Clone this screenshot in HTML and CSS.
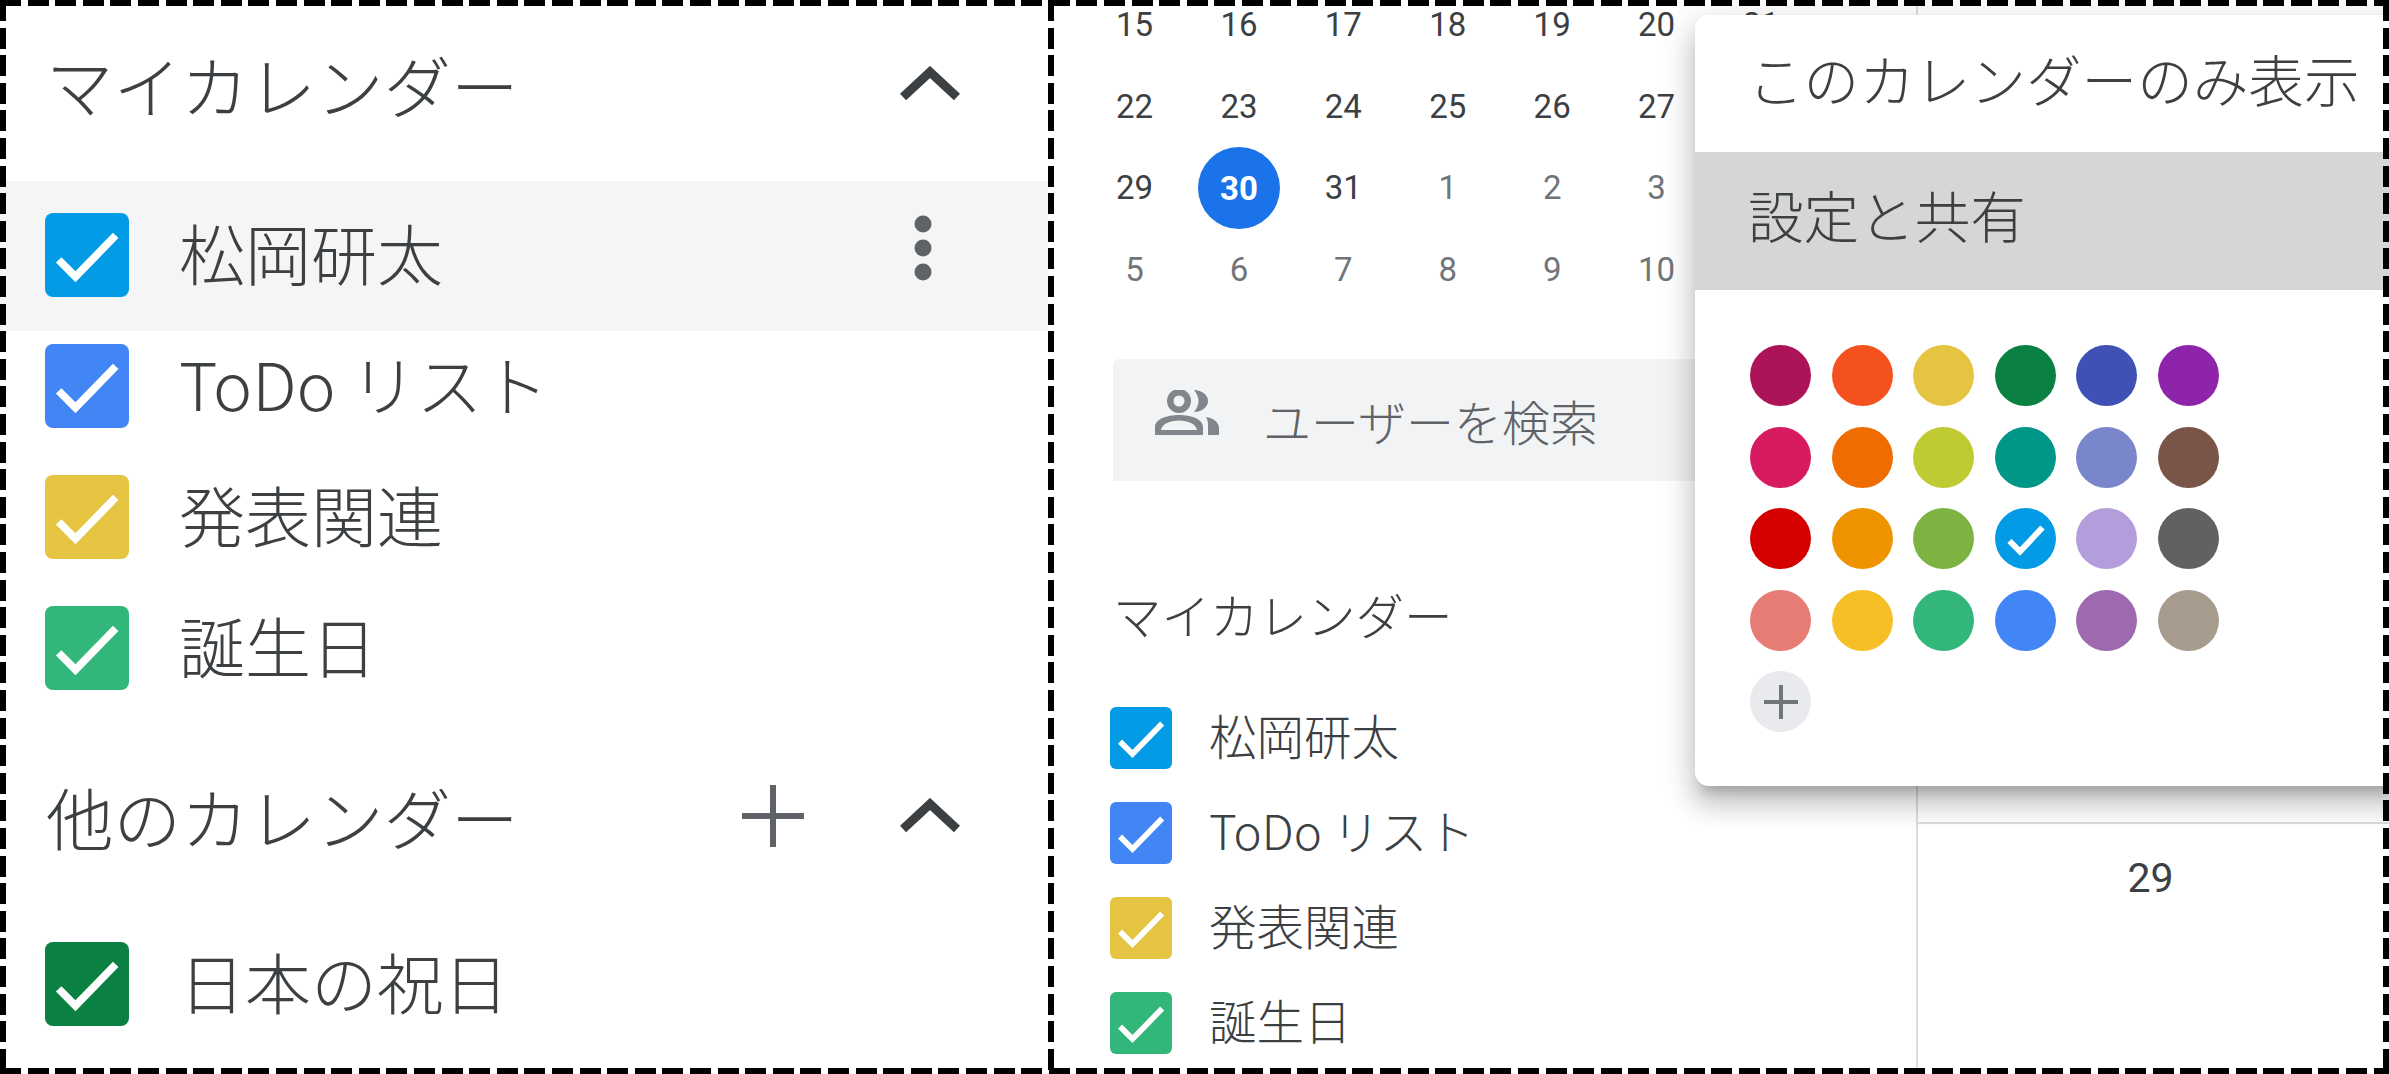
FILE: index.html
```html
<!DOCTYPE html>
<html>
<head>
    <meta charset="utf-8">
    <link rel="stylesheet" href="styles.css">
</head>
<body>
    <div class="shot">
        <!-- zoomed sidebar -->
        <div class="panel panel-left">
            <div class="big-head">
                <span class="big-title">マイカレンダー</span>
                <svg class="chevron" viewBox="0 0 60 36"><path d="M3 31 L30 6 L57 31"/></svg>
            </div>
            <div class="big-list">
                <div class="big-row big-row-active">
                    <span class="box box-big c-peacock"><svg viewBox="0 0 24 24"><path d="M3.9 13.4 L8.7 18.2 L20.2 6.4"/></svg></span>
                    <span class="big-name">松岡研太</span>
                    <svg class="kebab" viewBox="0 0 20 66"><circle cx="10" cy="9" r="8.5"/><circle cx="10" cy="33" r="8.5"/><circle cx="10" cy="57" r="8.5"/></svg>
                </div>
                <div class="big-row">
                    <span class="box box-big c-cobalt"><svg viewBox="0 0 24 24"><path d="M3.9 13.4 L8.7 18.2 L20.2 6.4"/></svg></span>
                    <span class="big-name">ToDo リスト</span>
                </div>
                <div class="big-row">
                    <span class="box box-big c-citron"><svg viewBox="0 0 24 24"><path d="M3.9 13.4 L8.7 18.2 L20.2 6.4"/></svg></span>
                    <span class="big-name">発表関連</span>
                </div>
                <div class="big-row">
                    <span class="box box-big c-sage"><svg viewBox="0 0 24 24"><path d="M3.9 13.4 L8.7 18.2 L20.2 6.4"/></svg></span>
                    <span class="big-name">誕生日</span>
                </div>
            </div>
            <div class="big-head big-head-other">
                <span class="big-title">他のカレンダー</span>
                <svg class="plus" viewBox="0 0 62 62"><path d="M31 0 V62 M0 31 H62"/></svg>
                <svg class="chevron" viewBox="0 0 60 36"><path d="M3 31 L30 6 L57 31"/></svg>
            </div>
            <div class="big-row big-row-last">
                <span class="box box-big c-basil"><svg viewBox="0 0 24 24"><path d="M3.9 13.4 L8.7 18.2 L20.2 6.4"/></svg></span>
                <span class="big-name">日本の祝日</span>
            </div>
        </div>

        <!-- calendar with open menu -->
        <div class="panel panel-right">
            <div class="side">
                <div class="mini-cal">
                    <span>15</span><span>16</span><span>17</span><span>18</span><span>19</span><span>20</span><span>21</span>
                    <span>22</span><span>23</span><span>24</span><span>25</span><span>26</span><span>27</span><span></span>
                    <span>29</span><span class="today">30</span><span>31</span><span class="off">1</span><span class="off">2</span><span class="off">3</span><span></span>
                    <span class="off">5</span><span class="off">6</span><span class="off">7</span><span class="off">8</span><span class="off">9</span><span class="off">10</span><span></span>
                </div>
                <div class="search">
                    <svg class="people" viewBox="0 0 64 46">
                        <path fill-rule="evenodd" d="M24 -1 A12 12 0 1 0 24 23 A12 12 0 1 0 24 -1 Z M24 5.5 A5.5 5.5 0 1 1 24 16.5 A5.5 5.5 0 1 1 24 5.500 Z"/>
                        <path fill-rule="evenodd" d="M0 45 V37 C0 29 12 25 24 25 C36 25 48 29 48 37 V45 Z M6 40 H42 C41 34 33 30.5 24 30.5 C15 30.5 7 34 6 40 Z"/>
                        <path d="M39 0 C47 0 53 5 53 11 C53 17 47 22 39 22 C42 18 43.5 15 43.5 11 C43.5 7 42 4 39 0 Z"/>
                        <path d="M51 27 C58 28 64 32 64 38 V45 H53 V37 C53 33 53 30 51 27 Z"/>
                    </svg>
                    <span class="search-text">ユーザーを検索</span>
                </div>
                <div class="side-title">マイカレンダー</div>
                <div class="side-list">
                    <div class="side-row"><span class="box box-small c-peacock"><svg viewBox="0 0 24 24"><path d="M3.9 13.4 L8.7 18.2 L20.2 6.4"/></svg></span><span class="side-name">松岡研太</span></div>
                    <div class="side-row"><span class="box box-small c-cobalt"><svg viewBox="0 0 24 24"><path d="M3.9 13.4 L8.7 18.2 L20.2 6.4"/></svg></span><span class="side-name">ToDo リスト</span></div>
                    <div class="side-row"><span class="box box-small c-citron"><svg viewBox="0 0 24 24"><path d="M3.9 13.4 L8.7 18.2 L20.2 6.4"/></svg></span><span class="side-name">発表関連</span></div>
                    <div class="side-row"><span class="box box-small c-sage"><svg viewBox="0 0 24 24"><path d="M3.9 13.4 L8.7 18.2 L20.2 6.4"/></svg></span><span class="side-name">誕生日</span></div>
                </div>
            </div>
            <div class="main">
                <div class="main-top"></div>
                <div class="main-cell">29</div>
            </div>
            <div class="menu">
                <div class="menu-item">このカレンダーのみ表示</div>
                <div class="menu-item menu-item-hover">設定と共有</div>
                <div class="swatches">
                    <span class="dot c-beetroot"></span>
                    <span class="dot c-tangerine"></span>
                    <span class="dot c-citron"></span>
                    <span class="dot c-basil"></span>
                    <span class="dot c-blueberry"></span>
                    <span class="dot c-grape"></span>
                    <span class="dot c-cherry"></span>
                    <span class="dot c-pumpkin"></span>
                    <span class="dot c-avocado"></span>
                    <span class="dot c-eucalyptus"></span>
                    <span class="dot c-lavender"></span>
                    <span class="dot c-cocoa"></span>
                    <span class="dot c-tomato"></span>
                    <span class="dot c-mango"></span>
                    <span class="dot c-pistachio"></span>
                    <span class="dot c-peacock"><svg viewBox="0 0 61 61"><path d="M14.5 33 L25 43.5 L47.5 19.5"/></svg></span>
                    <span class="dot c-wisteria"></span>
                    <span class="dot c-graphite"></span>
                    <span class="dot c-flamingo"></span>
                    <span class="dot c-banana"></span>
                    <span class="dot c-sage"></span>
                    <span class="dot c-cobalt"></span>
                    <span class="dot c-amethyst"></span>
                    <span class="dot c-birch"></span>
                    <span class="dot dot-add"><svg viewBox="0 0 34 34"><path d="M17 0 V34 M0 17 H34"/></svg></span>
                </div>
            </div>
        </div>
    </div>
</body>
</html>
```

FILE: styles.css
```css
html, body {
    margin: 0;
    height: 100%;
    background: #fff;
}
body {
    font-family: "Noto Sans CJK JP", "Noto Sans", sans-serif;
    color: #3c4043;
    overflow: hidden;
}
.shot {
    position: relative;
    display: flex;
    width: 2389px;
    height: 1074px;
}
/* dashed frame sits over everything, a normal dashed border has the wrong dash length */
.shot::after {
    content: "";
    position: absolute;
    inset: 0;
    pointer-events: none;
    background:
        repeating-linear-gradient(90deg, #000 0 21px, transparent 21px 27.6px) 0 0 / 100% 6px no-repeat,
        repeating-linear-gradient(90deg, #000 0 21px, transparent 21px 27.6px) 0 100% / 100% 6px no-repeat,
        repeating-linear-gradient(180deg, #000 0 21px, transparent 21px 27.6px) 0 0 / 6px 100% no-repeat,
        repeating-linear-gradient(180deg, #000 0 21px, transparent 21px 27.6px) 1048px 0 / 6px 100% no-repeat,
        repeating-linear-gradient(180deg, #000 0 21px, transparent 21px 27.6px) 100% 0 / 6px 100% no-repeat;
}
.panel {
    position: relative;
    height: 100%;
    overflow: hidden;
    box-sizing: border-box;
}
.panel-left {
    width: 1048px;
    flex: none;
    padding-top: 50px;
}
.panel-right {
    flex: 1;
    display: flex;
}

/* calendar colours */
.c-peacock { background: #039be5; }
.c-cobalt { background: #4285f4; }
.c-citron { background: #e4c441; }
.c-sage { background: #33b679; }
.c-basil { background: #0b8043; }
.c-beetroot { background: #ad1457; }
.c-tangerine { background: #f4511e; }
.c-blueberry { background: #3f51b5; }
.c-grape { background: #8e24aa; }
.c-cherry { background: #d81b60; }
.c-pumpkin { background: #ef6c00; }
.c-avocado { background: #c0ca33; }
.c-eucalyptus { background: #009688; }
.c-lavender { background: #7986cb; }
.c-cocoa { background: #795548; }
.c-tomato { background: #d50000; }
.c-mango { background: #f09300; }
.c-pistachio { background: #7cb342; }
.c-wisteria { background: #b39ddb; }
.c-graphite { background: #616161; }
.c-flamingo { background: #e67c73; }
.c-banana { background: #f6bf26; }
.c-amethyst { background: #9e69af; }
.c-birch { background: #a79b8e; }

.box {
    display: flex;
    flex: none;
    align-items: center;
    justify-content: center;
}
.box svg path {
    fill: none;
    stroke: #fff;
    stroke-width: 2.2;
}
.box-big {
    width: 84px;
    height: 84px;
    border-radius: 8px;
}
.box-big svg {
    width: 84px;
    height: 84px;
}
.box-small {
    width: 62px;
    height: 62px;
    border-radius: 6px;
}
.box-small svg {
    width: 62px;
    height: 62px;
}

/* left panel */
.big-head {
    display: flex;
    align-items: center;
    height: 68px;
    padding: 0 88px 0 46px;
}
.big-title {
    flex: 1;
    font-size: 67.5px;
    font-weight: 300;
    line-height: 68px;
}
.chevron {
    width: 60px;
    height: 36px;
}
.chevron path {
    fill: none;
    stroke: #3c4043;
    stroke-width: 9;
}
.plus {
    width: 62px;
    height: 62px;
    margin-right: 96px;
}
.plus path {
    fill: none;
    stroke: #5f6368;
    stroke-width: 6;
}
.big-list {
    margin-top: 63px;
}
.big-row {
    display: flex;
    align-items: center;
    height: 84px;
    padding-left: 45px;
    margin-top: 47px;
}
.big-row-active {
    height: 148px;
    margin-top: 0;
    margin-bottom: -34px;
    padding-bottom: 2px;
    padding-right: 115px;
    background: #f5f5f5;
}
.big-name {
    flex: 1;
    margin-left: 50px;
    margin-bottom: 8px;
    font-size: 66px;
    font-weight: 300;
    white-space: nowrap;
}
.kebab {
    width: 20px;
    height: 66px;
    margin-top: -14px;
    fill: #5f6368;
}
.big-head-other {
    margin-top: 92px;
}
.big-row-last {
    margin-top: 92px;
}

/* right panel: sidebar */
.side {
    width: 868px;
    flex: none;
    padding-left: 65px;
    box-sizing: border-box;
}
.mini-cal {
    display: grid;
    grid-template-columns: repeat(7, 104.4px);
    grid-auto-rows: 81.5px;
    margin-top: -16px;
    margin-left: -30.6px;
    font-family: Roboto, sans-serif;
    font-size: 33px;
    font-weight: 400;
}
.mini-cal span {
    display: flex;
    align-items: center;
    justify-content: center;
}
.mini-cal .off {
    color: #70757a;
}
.mini-cal .today {
    width: 82px;
    height: 82px;
    justify-self: center;
    border-radius: 50%;
    background: #1a73e8;
    color: #fff;
    font-weight: 700;
}
.search {
    display: flex;
    align-items: center;
    height: 122px;
    margin-top: 49px;
    padding-left: 42px;
    background: #f1f3f4;
    border-radius: 6px 0 0 0;
}
.people {
    width: 64px;
    height: 46px;
    margin-top: -14px;
    fill: #80868b;
}
.search-text {
    margin-left: 44px;
    font-size: 48px;
    font-weight: 300;
    color: #5f6368;
}
.side-title {
    margin-top: 100px;
    font-size: 48.5px;
    font-weight: 300;
    line-height: 66px;
}
.side-list {
    margin-top: 60px;
    margin-left: -3px;
}
.side-row {
    display: flex;
    align-items: center;
    gap: 37px;
    height: 62px;
    margin-bottom: 33px;
    font-size: 47.5px;
    font-weight: 300;
    white-space: nowrap;
}
.side-name {
    margin-bottom: 8px;
}

/* right panel: main grid */
.main {
    flex: 1;
    border-left: 2px solid #dadce0;
}
.main-top {
    height: 822px;
    border-bottom: 2px solid #dadce0;
}
.main-cell {
    width: 465px;
    padding-top: 22px;
    text-align: center;
    font-family: Roboto, sans-serif;
    font-size: 41px;
    line-height: 64px;
}

/* menu over the calendar */
.menu {
    position: absolute;
    left: 647px;
    top: 15px;
    width: 760px;
    height: 771px;
    background: #fff;
    border-radius: 14px;
    box-shadow: 0 20px 25px 2px rgba(0, 0, 0, .14), 0 8px 35px 5px rgba(0, 0, 0, .12), 0 12px 12px -7px rgba(0, 0, 0, .2);
}
.menu-item {
    display: flex;
    align-items: center;
    box-sizing: border-box;
    height: 137px;
    padding: 0 0 12px 53px;
    font-size: 55.6px;
    font-weight: 300;
    white-space: nowrap;
}
.menu-item-hover {
    height: 138px;
    padding-bottom: 14px;
    background: #d6d6d6;
}
.swatches {
    display: grid;
    grid-template-columns: repeat(6, 61px);
    grid-auto-rows: 61px;
    gap: 20.5px;
    padding: 55px 0 0 55px;
}
.dot {
    display: flex;
    align-items: center;
    justify-content: center;
    width: 61px;
    height: 61px;
    border-radius: 50%;
}
.dot svg {
    width: 61px;
    height: 61px;
}
.dot svg path {
    fill: none;
    stroke: #fff;
    stroke-width: 6;
}
.dot-add {
    background: #e8eaed;
}
.dot-add svg {
    width: 34px;
    height: 34px;
}
.dot-add svg path {
    stroke: #70757a;
    stroke-width: 4;
}
```
